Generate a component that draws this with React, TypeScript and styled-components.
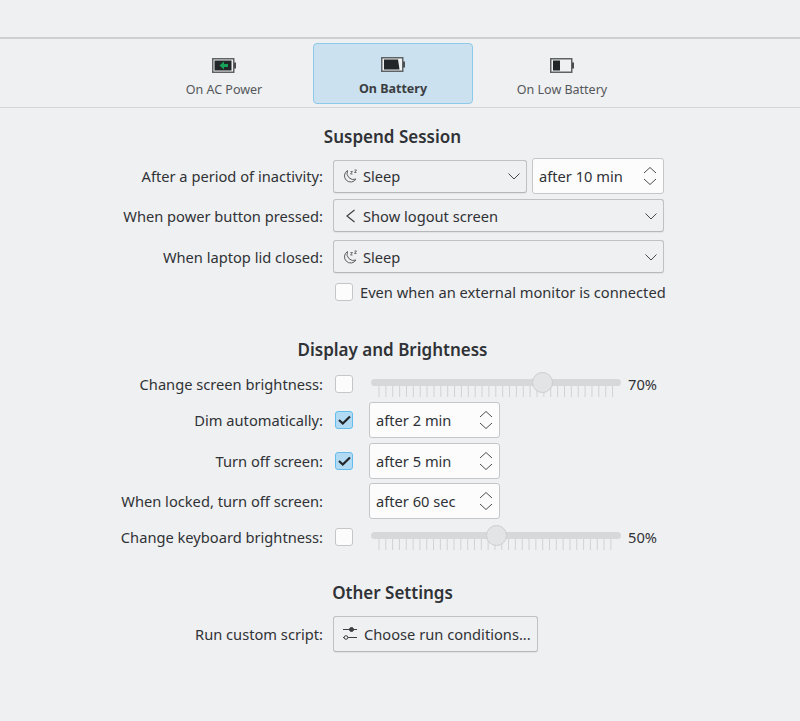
import React from "react";
import styled, { createGlobalStyle } from "styled-components";

const Global = createGlobalStyle`
  html, body { margin: 0; padding: 0; background: #eff0f1; }
  body { font-family: "Noto Sans", sans-serif; color: #2f3236; font-size: 14.67px; }
`;

const Page = styled.div`
  width: 800px;
  height: 721px;
  padding-top: 37px;
  box-sizing: border-box;
  overflow: hidden;
`;

const TabBar = styled.div`
  display: flex;
  gap: 9px;
  height: 71px;
  box-sizing: border-box;
  padding: 4px 0 3px 144px;
  border-top: 2px solid #cdcfd1;
  border-bottom: 1px solid #d3d5d7;
`;

const Tab = styled.div<{ $active?: boolean }>`
  width: 160px;
  box-sizing: border-box;
  display: flex;
  flex-direction: column;
  align-items: center;
  padding-top: ${(p) => (p.$active ? 13 : 14)}px;
  gap: 7px;
  border-radius: 4px;
  font-size: 12.5px;
  font-weight: ${(p) => (p.$active ? 700 : 400)};
  color: ${(p) => (p.$active ? "#3a3d41" : "#54575b")};
  background: ${(p) => (p.$active ? "#cbe1ef" : "transparent")};
  border: 1px solid ${(p) => (p.$active ? "#8ec9ea" : "transparent")};
`;

const TabLabel = styled.span`
  line-height: 17px;
`;

const Main = styled.div`
  width: 785px;
  display: flex;
  flex-direction: column;
`;

const Heading = styled.h2<{ $top: number; $bottom: number }>`
  margin: ${(p) => p.$top}px 0 ${(p) => p.$bottom}px;
  text-align: center;
  font-size: 17px;
  line-height: 22px;
  font-weight: 600;
  color: #2f3236;
`;

const Row = styled.div<{ $h?: number; $mb?: number }>`
  display: grid;
  grid-template-columns: 323px 1fr;
  column-gap: 10px;
  align-items: center;
  height: ${(p) => p.$h ?? 33}px;
  margin-bottom: ${(p) => p.$mb ?? 8}px;
`;

const Label = styled.label`
  text-align: right;
  white-space: nowrap;
`;

const Field = styled.div`
  display: flex;
  align-items: center;
  gap: 5px;
`;

const Combo = styled.div<{ $w: number }>`
  width: ${(p) => p.$w}px;
  height: 33px;
  box-sizing: border-box;
  display: flex;
  align-items: center;
  padding: 0 5px 0 8px;
  gap: 5px;
  background: #eff0f1;
  border: 1px solid #bfc1c3;
  border-bottom-color: #b5b7b9;
  border-radius: 3px;
  box-shadow: 0 1px 1px rgba(0, 0, 0, 0.06);
`;

const ComboIcon = styled.svg<{ $tone?: string }>`
  width: 16px;
  height: 16px;
  flex: none;
  color: ${(p) => p.$tone ?? "#3c3f43"};
`;

const ComboText = styled.span`
  flex: 1;
  white-space: nowrap;
`;

const Spin = styled.div<{ $w?: number; $ml?: number }>`
  width: ${(p) => p.$w ?? 132}px;
  height: 36px;
  box-sizing: border-box;
  display: flex;
  align-items: center;
  justify-content: space-between;
  padding: 0 6px;
  background: #fcfcfc;
  border: 1px solid #c4c6c8;
  border-radius: 3px;
  margin-left: ${(p) => p.$ml ?? 0}px;
  white-space: nowrap;
`;

const SpinArrows = styled.svg`
  width: 14px;
  height: 24px;
  flex: none;
`;

const Check = styled.span<{ $on?: boolean }>`
  width: 18px;
  height: 18px;
  margin-left: 2px;
  box-sizing: border-box;
  flex: none;
  display: flex;
  align-items: center;
  justify-content: center;
  border-radius: 3px;
  background: ${(p) => (p.$on ? "#b3daf3" : "#fcfcfc")};
  border: 1px solid ${(p) => (p.$on ? "#64bcec" : "#c4c6c8")};
`;

const CheckRow = styled.div`
  display: flex;
  align-items: center;
  gap: 7px;
  white-space: nowrap;
`;

const SliderBox = styled.div`
  position: relative;
  width: 250px;
  height: 28px;
  margin-left: 13px;
  flex: none;
`;

const Track = styled.div`
  position: absolute;
  left: 0;
  right: 0;
  top: 9px;
  height: 7px;
  border-radius: 4px;
  background: #d6d8da;
`;

const Ticks = styled.svg`
  position: absolute;
  left: 0;
  top: 16px;
  width: 250px;
  height: 12px;
`;

const Thumb = styled.div`
  position: absolute;
  top: 2px;
  width: 21px;
  height: 21px;
  box-sizing: border-box;
  border-radius: 50%;
  background: #e3e4e6;
  border: 1px solid #cbcdcf;
`;

const Percent = styled.span`
  font-size: 14.67px;
  margin-left: 2px;
`;

const Button = styled.div`
  width: 205px;
  height: 36px;
  box-sizing: border-box;
  display: flex;
  align-items: center;
  gap: 6px;
  padding: 0 8px;
  white-space: nowrap;
  background: #eff0f1;
  border: 1px solid #bfc1c3;
  border-bottom-color: #b5b7b9;
  border-radius: 3px;
  box-shadow: 0 1px 1px rgba(0, 0, 0, 0.06);
`;

const Chevron = () => (
  <svg width="14" height="14" viewBox="0 0 14 14" fill="none" stroke="#45484c" strokeWidth="1">
    <path d="M1.5 4.5 L7 10 L12.5 4.5" />
  </svg>
);

const Arrows = () => (
  <SpinArrows viewBox="0 0 14 24" fill="none" stroke="#4a4d50" strokeWidth="1">
    <path d="M1 9 L7 3.5 L13 9" />
    <path d="M1 15 L7 20.5 L13 15" />
  </SpinArrows>
);

const Moon = () => (
  <ComboIcon $tone="#5c5f63" viewBox="0 0 16 16" fill="none" stroke="currentColor" strokeWidth="1">
    <path d="M5.5 2.5 A6.2 6.2 0 1 0 14 11 A6.5 6.5 0 0 1 5.5 2.5 Z" />
    <path d="M8.5 3.5 h2 l-2 2.5 h2 M12.5 2 h2 l-2 2.5 h2" strokeWidth="0.9" />
  </ComboIcon>
);

const Back = () => (
  <ComboIcon viewBox="0 0 16 16" fill="none" stroke="currentColor" strokeWidth="1.2">
    <path d="M12.5 2 L5 8 L12.5 14" />
  </ComboIcon>
);

const Tick = () => (
  <svg width="13" height="10" viewBox="0 0 13 10" fill="none" stroke="#232629" strokeWidth="2.2">
    <path d="M1 5 L4.8 8.5 L12 1.5" />
  </svg>
);

const Sliders = () => (
  <ComboIcon viewBox="0 0 16 16" fill="none" stroke="currentColor" strokeWidth="1">
    <path d="M1 3.5 H15 M1 11.5 H15" />
    <circle cx="9.5" cy="3.5" r="2" fill="currentColor" />
    <circle cx="4" cy="11.5" r="1.8" fill="#eff0f1" />
  </ComboIcon>
);

const Battery = ({ fill, charging }: { fill: React.ReactNode; charging?: boolean }) => (
  <svg width="24" height="16" viewBox="0 0 24 16" fill="none">
    <rect x="0.75" y="0.75" width="21" height="13.5" fill="#eff0f1" stroke="#5f6265" strokeWidth="1.5" />
    <rect x="22" y="4.5" width="2" height="6" fill="#4a4d50" />
    {fill}
    {charging && <path d="M7.5 7.5 L12 3.5 V6 H16 V9 H12 V11.5 Z" fill="#17a35a" />}
  </svg>
);

const tickList = (start: number, step: number, count: number) =>
  Array.from({ length: count }, (_, i) => start + i * step);

const SliderTicks = ({ start, step, count }: { start: number; step: number; count: number }) => (
  <Ticks viewBox="0 0 250 12">
    {tickList(start, step, count).map((x) => (
      <line key={x} x1={x} x2={x} y1="0" y2="11" stroke="#d0d2d4" strokeWidth="1" />
    ))}
  </Ticks>
);

const Slider = ({ thumb, start, step, count }: { thumb: number; start: number; step: number; count: number }) => (
  <SliderBox>
    <Track />
    <SliderTicks start={start} step={step} count={count} />
    <Thumb style={{ left: thumb }} />
  </SliderBox>
);

export default function App() {
  return (
    <Page>
      <Global />
      <TabBar>
        <Tab>
          <Battery charging fill={<rect x="2.5" y="2.5" width="17" height="10" fill="#232629" />} />
          <TabLabel>On AC Power</TabLabel>
        </Tab>
        <Tab $active>
          <Battery fill={<path d="M3 2.5 H17 L18.5 12.5 H3 Z" fill="#232629" />} />
          <TabLabel>On Battery</TabLabel>
        </Tab>
        <Tab>
          <Battery fill={<rect x="3" y="2.5" width="7" height="10" fill="#232629" />} />
          <TabLabel>On Low Battery</TabLabel>
        </Tab>
      </TabBar>
      <Main>
        <Heading $top={18} $bottom={10}>Suspend Session</Heading>
        <Row>
          <Label>After a period of inactivity:</Label>
          <Field>
            <Combo $w={194}>
              <Moon />
              <ComboText>Sleep</ComboText>
              <Chevron />
            </Combo>
            <Spin>
              after 10 min
              <Arrows />
            </Spin>
          </Field>
        </Row>
        <Row>
          <Label>When power button pressed:</Label>
          <Field>
            <Combo $w={331}>
              <Back />
              <ComboText>Show logout screen</ComboText>
              <Chevron />
            </Combo>
          </Field>
        </Row>
        <Row $mb={9}>
          <Label>When laptop lid closed:</Label>
          <Field>
            <Combo $w={331}>
              <Moon />
              <ComboText>Sleep</ComboText>
              <Chevron />
            </Combo>
          </Field>
        </Row>
        <Row $h={18} $mb={0}>
          <span />
          <CheckRow>
            <Check />
            Even when an external monitor is connected
          </CheckRow>
        </Row>
        <Heading $top={39} $bottom={9}>Display and Brightness</Heading>
        <Row $h={26} $mb={6}>
          <Label>Change screen brightness:</Label>
          <Field>
            <Check />
            <Slider thumb={161} start={8} step={6.87} count={35} />
            <Percent>70%</Percent>
          </Field>
        </Row>
        <Row $h={36} $mb={5}>
          <Label>Dim automatically:</Label>
          <Field>
            <Check $on><Tick /></Check>
            <Spin $w={131} $ml={11}>after 2 min<Arrows /></Spin>
          </Field>
        </Row>
        <Row $h={36} $mb={4}>
          <Label>Turn off screen:</Label>
          <Field>
            <Check $on><Tick /></Check>
            <Spin $w={131} $ml={11}>after 5 min<Arrows /></Spin>
          </Field>
        </Row>
        <Row $h={36} $mb={4}>
          <Label>When locked, turn off screen:</Label>
          <Field>
            <Spin $w={131} $ml={36}>after 60 sec<Arrows /></Spin>
          </Field>
        </Row>
        <Row $h={26} $mb={0}>
          <Label>Change keyboard brightness:</Label>
          <Field>
            <Check />
            <Slider thumb={115} start={8} step={6.82} count={35} />
            <Percent>50%</Percent>
          </Field>
        </Row>
        <Heading $top={33} $bottom={12}>Other Settings</Heading>
        <Row $h={36}>
          <Label>Run custom script:</Label>
          <Field>
            <Button>
              <Sliders />
              Choose run conditions...
            </Button>
          </Field>
        </Row>
      </Main>
    </Page>
  );
}
